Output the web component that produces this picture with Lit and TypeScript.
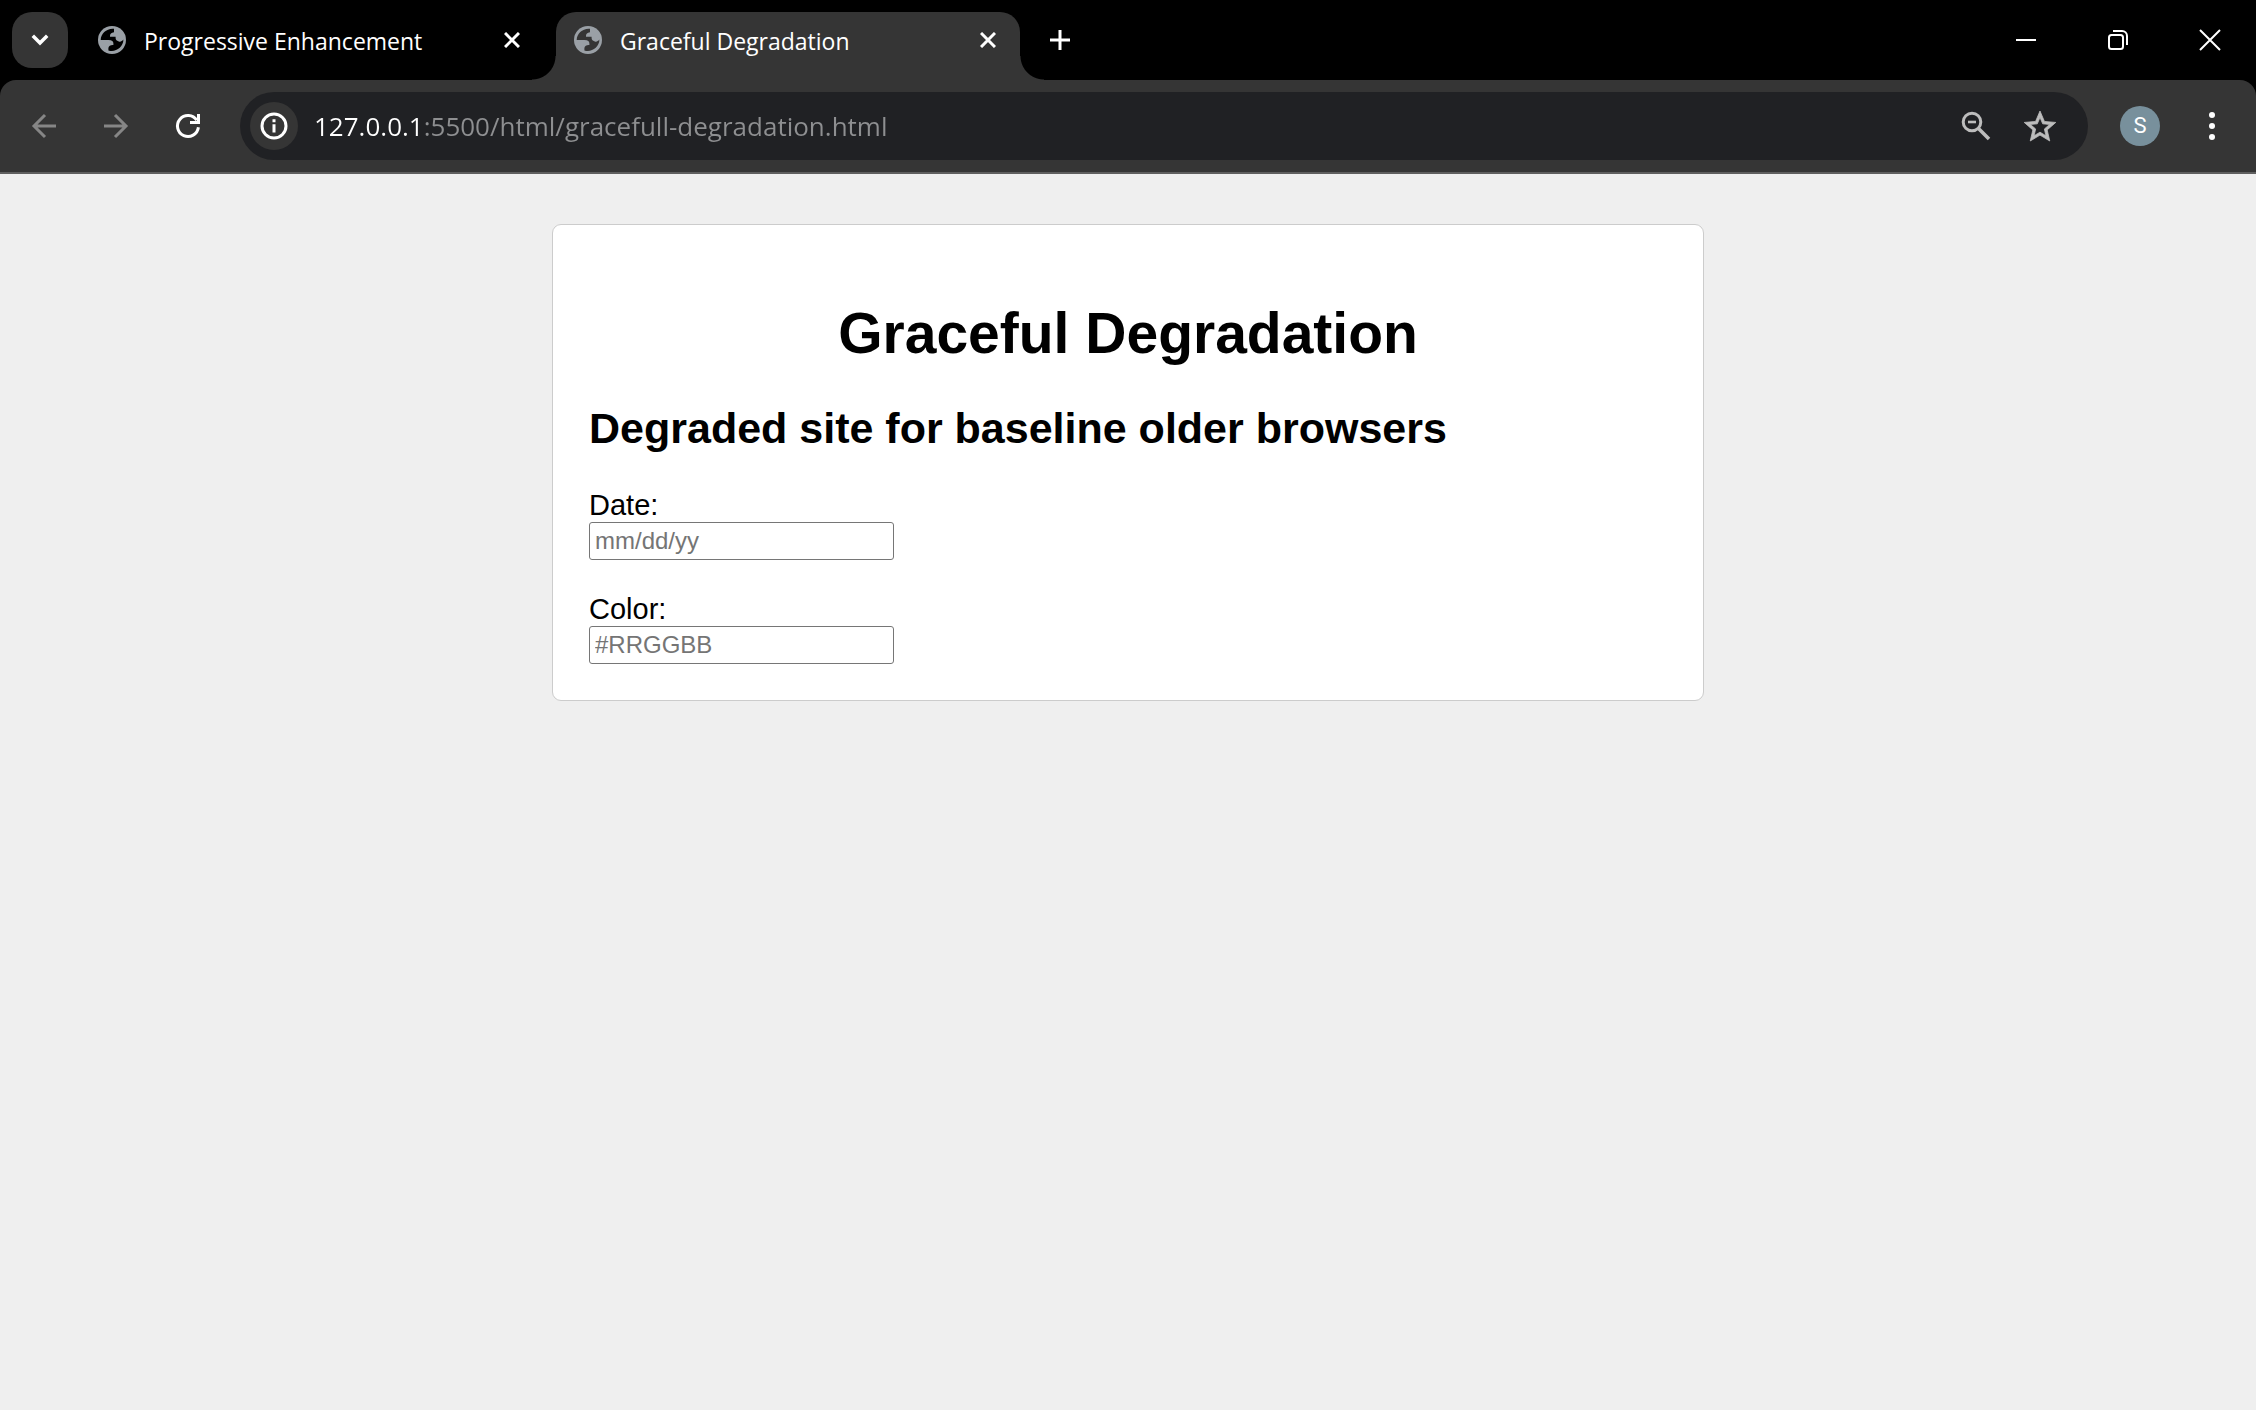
import { LitElement, html, css, svg } from "lit";
import { customElement, property } from "lit/decorators.js";

const globe = html`<svg width="28" height="28" viewBox="0 0 28 28" aria-hidden="true">
  <circle cx="14" cy="14" r="14" fill="#9aa0a6"></circle>
  <path class="land" d="M16 2.800C9 2 2.700 7.400 2.700 14H10.500C14 14 15.400 15.400 15.400 17.600V19H14.600C12.600 19 10.600 20 10.400 22V24.400C17 26.800 25.400 21.600 25.400 13.600C23.800 15.400 22.400 16 20.800 15.400L18.800 14.400C17.600 13.600 17.600 12.600 17.600 10.800H12V9.800C12 8 13.200 6.600 16 6.200Z"></path>
</svg>`;

@customElement("browser-tab")
export class BrowserTab extends LitElement {
  @property() label = "";
  @property({ type: Boolean, reflect: true }) active = false;

  static styles = css`
    :host {
      display: flex;
      position: relative;
      box-sizing: border-box;
      width: 464px;
      min-width: 160px;
      flex-shrink: 1;
      padding: 0 12px 12px 18px;
      align-items: center;
      gap: 18px;
      color: #fff;
      border-radius: 20px 20px 0 0;
    }
    .land { fill: #000; }
    :host([active]) .land { fill: #353535; }
    :host([active]) { background: #353535; }
    :host([active])::before,
    :host([active])::after {
      content: "";
      position: absolute;
      bottom: 0;
      width: 24px;
      height: 24px;
    }
    :host([active])::before {
      left: -24px;
      background: radial-gradient(circle at 0 0, transparent 23px, #353535 24px);
    }
    :host([active])::after {
      right: -24px;
      background: radial-gradient(circle at 100% 0, transparent 23px, #353535 24px);
    }
    svg { display: block; flex: none; }
    .title {
      flex: 1;
      min-width: 0;
      padding-top: 2px;
      overflow: hidden;
      white-space: nowrap;
      font: 23px/32px "Open Sans", "Noto Sans", sans-serif;
    }
    button {
      display: grid;
      place-items: center;
      width: 40px;
      height: 40px;
      padding: 0;
      border: 0;
      background: none;
      color: inherit;
    }
  `;

  render() {
    return html`${globe}<span class="title">${this.label}</span>
      <button aria-label="Close tab">
        <svg width="16" height="16" viewBox="0 0 16 16"><path d="M1 1L15 15M15 1L1 15" stroke="currentColor" stroke-width="3"></path></svg>
      </button>`;
  }
}

const icons = {
  chevron: svg`<path d="M6.800 9.800L14 17L21.200 9.800" stroke-width="3.500"/>`,
  plus: svg`<path d="M14 4V24M4 14H24" stroke-width="3"/>`,
  minimize: svg`<path d="M4 14H24" stroke-width="2"/>`,
  restore: svg`<rect x="5" y="9" width="14" height="14" rx="2.500" stroke-width="2"/><path d="M9 5H18A5 5 0 0 1 23 10V19" stroke-width="2"/>`,
  close: svg`<path d="M4 4L24 24M24 4L4 24" stroke-width="2"/>`,
  back: svg`<path d="M26 14H4.500M15 3L4 14L15 25" stroke-width="3"/>`,
  forward: svg`<path d="M2 14H23.500M13 3L24 14L13 25" stroke-width="3"/>`,
  reload: svg`<path d="M24.400 15.300A10.500 10.500 0 1 1 22.800 8.300" stroke-width="3"/><path d="M24.500 2V10.500H16" stroke-width="3"/>`,
  info: svg`<circle cx="14" cy="14" r="12" stroke-width="3"/><path d="M14 12.200V20.600M14 7.200V10.200" stroke-width="3"/>`,
  zoomOut: svg`<circle cx="10" cy="10" r="8.800" stroke-width="3"/><path d="M16.500 16.500L27 27" stroke-width="3.500"/><path d="M6 10H14" stroke-width="2.600"/>`,
  dots: svg`<g fill="currentColor" stroke="none"><circle cx="14" cy="3" r="3"/><circle cx="14" cy="14" r="3"/><circle cx="14" cy="25" r="3"/></g>`,
};

const icon = (name: keyof typeof icons) =>
  html`<svg width="28" height="28" viewBox="0 0 28 28" fill="none" stroke="currentColor" aria-hidden="true">${icons[name]}</svg>`;

@customElement("app-root")
export class AppRoot extends LitElement {
  static styles = css`
    :host {
      display: flex;
      flex-direction: column;
      min-height: 100vh;
      background: #efefef;
      font-family: "Liberation Sans", Arial, sans-serif;
    }
    svg { display: block; overflow: visible; }
    button {
      display: grid;
      place-items: center;
      flex: none;
      padding: 0;
      border: 0;
      background: none;
      color: #fff;
    }
    .strip {
      display: flex;
      height: 80px;
      background: #000;
    }
    .tabs {
      display: flex;
      flex: 1;
      min-width: 0;
      gap: 12px;
      padding: 12px 12px 0;
    }
    .square {
      width: 56px;
      height: 56px;
    }
    .search {
      border-radius: 20px;
      background: #353535;
    }
    .controls { display: flex; }
    .controls button { width: 92px; }
    .frame { background: #000; }
    .toolbar {
      display: flex;
      align-items: center;
      height: 92px;
      padding: 0 16px;
      background: #353535;
      border-bottom: 2px solid #5f5f5f;
      border-radius: 16px 16px 0 0;
    }
    .nav {
      display: flex;
      gap: 16px;
    }
    .nav button:disabled { color: #868686; }
    .omnibox {
      display: flex;
      flex: 1;
      align-items: center;
      box-sizing: border-box;
      height: 68px;
      min-width: 0;
      margin: 0 32px 0 24px;
      padding: 0 24px 0 10px;
      border-radius: 34px;
      background: #202124;
    }
    .chip {
      width: 48px;
      height: 48px;
      border-radius: 50%;
      background: #353535;
    }
    .url {
      flex: 1;
      min-width: 0;
      margin: 0 16px;
      padding: 0;
      border: 0;
      outline: 0;
      font: 26px/40px "Open Sans", "Noto Sans", sans-serif;
      color: transparent;
      caret-color: #fff;
      background: linear-gradient(90deg, #fff 109px, #8e8f91 109px);
      -webkit-background-clip: text;
      background-clip: text;
    }
    .actions {
      display: flex;
      gap: 16px;
    }
    .actions button {
      width: 48px;
      height: 48px;
      color: #bdbdbd;
    }
    .avatar {
      width: 40px;
      height: 40px;
      margin-right: 24px;
      border-radius: 50%;
      background: #78909c;
      font: 22px/40px Roboto, sans-serif;
    }
    .page {
      flex: 1;
      padding: 50px 24px;
    }
    .card {
      box-sizing: border-box;
      max-width: 1152px;
      margin: 0 auto;
      padding: 36px;
      border: 1px solid #ccc;
      border-radius: 9px;
      background: #fff;
      color: #000;
    }
    h1 {
      margin: 39px 0 38px;
      font-size: 57px;
      line-height: 66px;
      text-align: center;
    }
    h2 {
      margin: 0 0 36px;
      font-size: 43px;
      line-height: 49px;
    }
    form {
      display: grid;
      gap: 33px;
    }
    .field {
      display: flex;
      flex-direction: column;
      align-items: flex-start;
    }
    label {
      font-size: 29px;
      line-height: 33px;
    }
    .box {
      box-sizing: border-box;
      width: 305px;
      max-width: 100%;
      height: 38px;
      padding: 0 5px;
      border: 1px solid #767676;
      border-radius: 3px;
      background: #fff;
      font: 24px/28px "Liberation Sans", Arial, sans-serif;
    }
    .box::placeholder { color: #757575; }
  `;

  render() {
    return html`
      <header class="frame">
        <div class="strip">
          <div class="tabs">
            <button class="square search" aria-label="Search tabs">${icon("chevron")}</button>
            <browser-tab label="Progressive Enhancement"></browser-tab>
            <browser-tab label="Graceful Degradation" active></browser-tab>
            <button class="square" aria-label="New tab">${icon("plus")}</button>
          </div>
          <div class="controls">
            <button aria-label="Minimize">${icon("minimize")}</button>
            <button aria-label="Restore">${icon("restore")}</button>
            <button aria-label="Close">${icon("close")}</button>
          </div>
        </div>
        <div class="toolbar">
          <nav class="nav">
            <button class="square" disabled aria-label="Back">${icon("back")}</button>
            <button class="square" disabled aria-label="Forward">${icon("forward")}</button>
            <button class="square" aria-label="Reload">${icon("reload")}</button>
          </nav>
          <div class="omnibox">
            <button class="chip" aria-label="Site information">${icon("info")}</button>
            <input class="url" type="text" aria-label="Address" spellcheck="false"
              .value=${"127.0.0.1:5500/html/gracefull-degradation.html"} />
            <div class="actions">
              <button aria-label="Zoom">${icon("zoomOut")}</button>
              <button aria-label="Bookmark">
                <svg width="32" height="30" viewBox="2 2 20 19" fill="currentColor" stroke="currentColor" stroke-width="0.500" aria-hidden="true">
                  <path d="M22 9.240l-7.190-.62L12 2 9.190 8.630 2 9.240l5.460 4.730L5.820 21 12 17.270 18.180 21l-1.630-7.030L22 9.240zM12 15.400l-3.760 2.270 1-4.280-3.320-2.880 4.380-.38L12 6.100l1.710 4.040 4.380.38-3.320 2.880 1 4.280L12 15.400z"></path>
                </svg>
              </button>
            </div>
          </div>
          <button class="avatar" aria-label="Profile">S</button>
          <button class="square" aria-label="Menu">${icon("dots")}</button>
        </div>
      </header>
      <main class="page">
        <section class="card">
          <h1>Graceful Degradation</h1>
          <h2>Degraded site for baseline older browsers</h2>
          <form>
            <div class="field">
              <label for="date">Date:</label>
              <input class="box" id="date" type="text" placeholder="mm/dd/yy" />
            </div>
            <div class="field">
              <label for="color">Color:</label>
              <input class="box" id="color" type="text" placeholder="#RRGGBB" />
            </div>
          </form>
        </section>
      </main>
    `;
  }
}
